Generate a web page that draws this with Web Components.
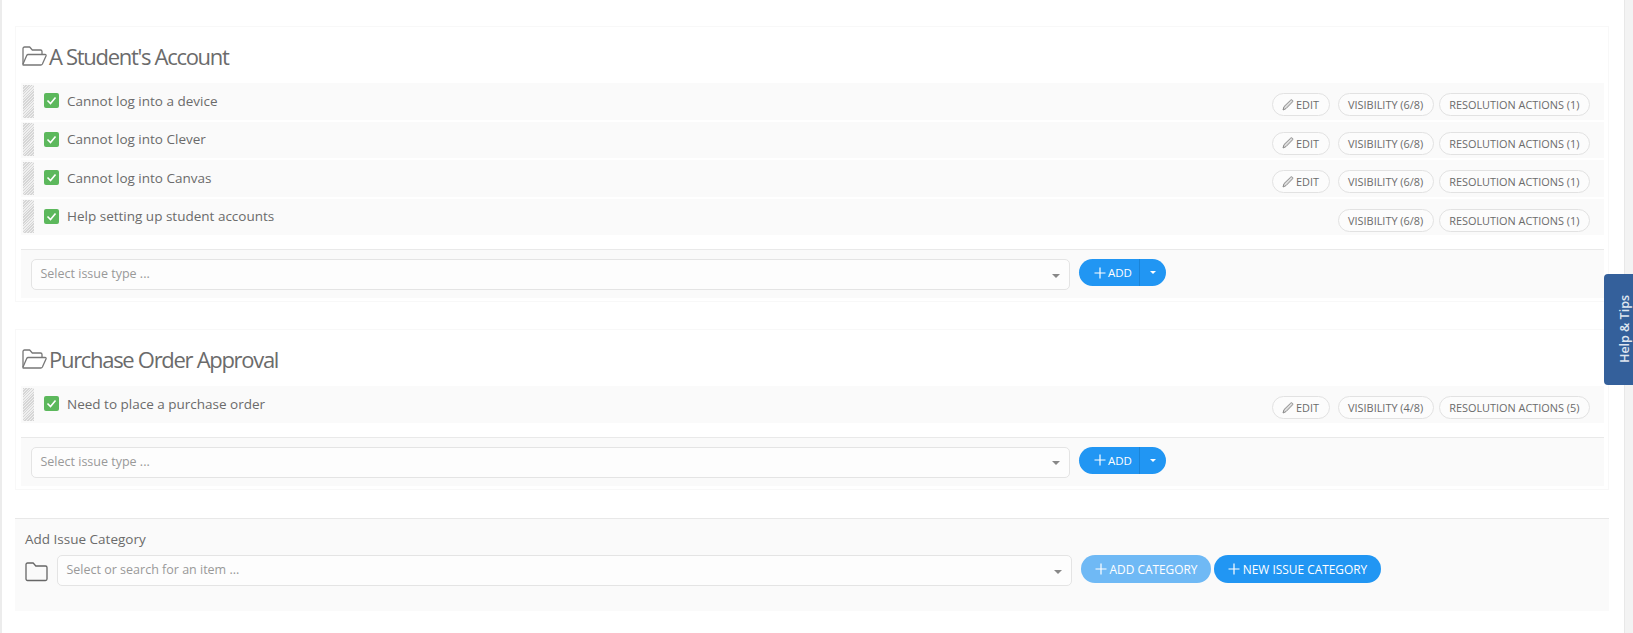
<!DOCTYPE html>
<html>
<head>
<meta charset="utf-8">
<style>
  html, body { margin: 0; height: 100%; overflow: hidden; background: #f3f3f3; }
  body { font-family: "Open Sans", sans-serif; color: #6b6b6b; }
</style>
</head>
<body>
<pagina-issues>
  <categoria-issue titulo="A Student's Account">
    <fila-issue texto="Cannot log into a device" editar visibilidad="6/8" acciones="1"></fila-issue>
    <fila-issue texto="Cannot log into Clever" editar visibilidad="6/8" acciones="1"></fila-issue>
    <fila-issue texto="Cannot log into Canvas" editar visibilidad="6/8" acciones="1"></fila-issue>
    <fila-issue texto="Help setting up student accounts" visibilidad="6/8" acciones="1"></fila-issue>
  </categoria-issue>
  <categoria-issue titulo="Purchase Order Approval" class="segunda">
    <fila-issue texto="Need to place a purchase order" editar visibilidad="4/8" acciones="5"></fila-issue>
  </categoria-issue>
  <agregar-categoria></agregar-categoria>
</pagina-issues>
<tab-ayuda></tab-ayuda>

<script>
const iconoPlus = `<svg width="12" height="12" viewBox="0 0 12 12" style="flex:none"><path d="M6 .5v11M.5 6h11" stroke="#fff" stroke-width="1.2" fill="none"/></svg>`;

class PaginaIssues extends HTMLElement {
    constructor() {
        super();
        this.attachShadow({ mode: "open" });
        this.shadowRoot.innerHTML = `
            <style>
                :host {
                    display: block;
                    box-sizing: border-box;
                    width: 1625px;
                    height: 633px;
                    background: #fff;
                    border-left: 2px solid #ececec;
                    border-right: 1px solid #e8e8e8;
                    padding: 26px 15px 0 13px;
                }
                ::slotted(categoria-issue) { margin-bottom: 27px; }
            </style>
            <slot></slot>
        `;
    }
}

class CategoriaIssue extends HTMLElement {
    constructor() {
        super();
        this.attachShadow({ mode: "open" });
    }

    connectedCallback() {
        this.shadowRoot.innerHTML = `
            <style>
                :host {
                    display: block;
                    border: 1px solid #f8f8f8;
                    padding: 0 4px 3px 5px;
                }
                h2 {
                    display: flex;
                    align-items: center;
                    gap: 2px;
                    margin: 0;
                    height: 56px;
                    padding-top: 1px;
                    box-sizing: border-box;
                    font-size: 22px;
                    font-weight: 400;
                    letter-spacing: -1.3px;
                    color: #6b6b6b;
                }
                svg { flex: none; margin-top: 1px; }
                .filas { display: flex; flex-direction: column; gap: 2px; }
                selector-issue { margin-top: 14px; }
            </style>
            <h2>
                <svg width="26" height="22" viewBox="0 0 26 22" fill="none" stroke="#777" stroke-width="1.3" stroke-linejoin="round">
                    <path d="M2 19V3.5C2 2.7 2.7 2 3.5 2h5.2l2.6 3h8.2c.8 0 1.5.7 1.5 1.5V9"/>
                    <path d="M2.2 20h17.6c.7 0 1.2-.3 1.6-1l3.6-8c.3-.8-.1-1.5-1-1.5H7.2c-.7 0-1.2.3-1.5 1L2 19c-.2.6 0 1 .2 1z"/>
                </svg>
                <span>${this.getAttribute("titulo")}</span>
            </h2>
            <div class="filas"><slot></slot></div>
            <selector-issue></selector-issue>
        `;
    }
}

class FilaIssue extends HTMLElement {
    constructor() {
        super();
        this.attachShadow({ mode: "open" });
    }

    connectedCallback() {
        const editar = this.hasAttribute("editar");
        this.shadowRoot.innerHTML = `
            <style>
                :host {
                    display: flex;
                    align-items: center;
                    box-sizing: border-box;
                    height: 36.5px;
                    padding: 2px 14px 0 2px;
                    background: #fafafa;
                }
                .asa {
                    width: 11px;
                    height: 33px;
                    flex: none;
                    margin-top: -2px;
                    background: repeating-linear-gradient(135deg, #d6d6d6 0 1px, #efefef 1px 2px);
                }
                .check {
                    width: 15px;
                    height: 15px;
                    flex: none;
                    margin: -3px 8px 0 10px;
                    border-radius: 2px;
                    background: #5cb85c;
                    display: flex;
                    align-items: center;
                    justify-content: center;
                }
                .texto { flex: 1; font-size: 13.5px; color: #6b6b6b; margin-top: -3px; }
                .botones { display: flex; gap: 5px; margin-top: 5px; }
                .editar { margin-right: 3px; }
            </style>
            <span class="asa"></span>
            <span class="check">
                <svg width="11" height="9" viewBox="0 0 11 9" fill="none" stroke="#fff" stroke-width="1.6"><path d="M1.5 4.5l3 3 5-6"/></svg>
            </span>
            <span class="texto">${this.getAttribute("texto")}</span>
            <span class="botones">
                ${editar ? `<boton-pill class="editar" lapiz>Edit</boton-pill>` : ""}
                <boton-pill>Visibility (${this.getAttribute("visibilidad")})</boton-pill>
                <boton-pill>Resolution Actions (${this.getAttribute("acciones")})</boton-pill>
            </span>
        `;
    }
}

class BotonPill extends HTMLElement {
    constructor() {
        super();
        this.attachShadow({ mode: "open" });
    }

    connectedCallback() {
        const lapiz = this.hasAttribute("lapiz");
        this.shadowRoot.innerHTML = `
            <style>
                :host {
                    display: inline-flex;
                    align-items: center;
                    gap: 2px;
                    box-sizing: border-box;
                    height: 23px;
                    padding: 0 9.5px;
                    border: 1px solid #e2e2e2;
                    border-radius: 12px;
                    background: #fcfcfc;
                    font-size: 10.9px;
                    color: #6b6b6b;
                    text-transform: uppercase;
                    white-space: nowrap;
                }
            </style>
            ${lapiz ? `<svg width="12" height="12" viewBox="0 0 12 12" fill="#ddd" stroke="#888" stroke-width="1"><path d="M1 11l1-3.4L8.6 1.2c.5-.5 1.3-.5 1.8 0s.5 1.3 0 1.8L4 9.6z"/></svg>` : ""}
            <slot></slot>
        `;
    }
}

class CajaSelect extends HTMLElement {
    constructor() {
        super();
        this.attachShadow({ mode: "open" });
    }

    connectedCallback() {
        this.shadowRoot.innerHTML = `
            <style>
                :host {
                    display: flex;
                    align-items: center;
                    box-sizing: border-box;
                    height: 31px;
                    padding: 0 9px 0 8.5px;
                    border: 1px solid #e4e4e4;
                    border-radius: 5px;
                    background: #fdfdfd;
                    font-size: 12.5px;
                    color: #999;
                }
                span { flex: 1; margin-top: -2px; }
                i {
                    width: 0;
                    height: 0;
                    margin-top: 2px;
                    border-left: 4px solid transparent;
                    border-right: 4px solid transparent;
                    border-top: 4px solid #888;
                }
            </style>
            <span>${this.getAttribute("texto")}</span><i></i>
        `;
    }
}

class SelectorIssue extends HTMLElement {
    constructor() {
        super();
        this.attachShadow({ mode: "open" });
        this.shadowRoot.innerHTML = `
            <style>
                :host {
                    display: flex;
                    align-items: flex-start;
                    box-sizing: border-box;
                    height: 49px;
                    padding: 9px 0 0 10px;
                    border-top: 1px solid #e9e9e9;
                    background: #fafafa;
                }
                caja-select { width: 1039px; }
                .add {
                    display: flex;
                    height: 27px;
                    margin-left: 9px;
                    color: #fff;
                    font-size: 11.5px;
                    background: #2196f3;
                    border-radius: 14px;
                    overflow: hidden;
                }
                .main {
                    display: flex;
                    align-items: center;
                    gap: 2px;
                    width: 61px;
                    box-sizing: border-box;
                    padding-left: 15px;
                    border-right: 1px solid #1a84d8;
                }
                .flecha {
                    width: 26px;
                    display: flex;
                    align-items: center;
                    justify-content: center;
                }
                .flecha i {
                    border-left: 3px solid transparent;
                    border-right: 3px solid transparent;
                    border-top: 3px solid #fff;
                }
            </style>
            <caja-select texto="Select issue type ..."></caja-select>
            <div class="add">
                <span class="main">${iconoPlus}ADD</span>
                <span class="flecha"><i></i></span>
            </div>
        `;
    }
}

class AgregarCategoria extends HTMLElement {
    constructor() {
        super();
        this.attachShadow({ mode: "open" });
        this.shadowRoot.innerHTML = `
            <style>
                :host {
                    display: block;
                    box-sizing: border-box;
                    height: 93px;
                    margin-top: 28.5px;
                    padding: 11px 10px 0;
                    background: #fafafa;
                    border-top: 1px solid #e8e8e8;
                }
                .titulo { font-size: 13.5px; color: #6b6b6b; line-height: 19px; }
                .linea { display: flex; align-items: flex-start; margin-top: 6px; }
                .carpeta { flex: none; margin: 7px 9px 0 0; }
                caja-select { width: 1015px; }
                .azul {
                    display: flex;
                    align-items: center;
                    justify-content: center;
                    gap: 3px;
                    height: 28px;
                    border-radius: 14px;
                    color: #fff;
                    font-size: 11.9px;
                    background: #2196f3;
                    white-space: nowrap;
                }
                .cat { width: 130px; margin-left: 9px; background: #6fb9f5; }
                .nueva { width: 167px; margin-left: 3px; }
            </style>
            <div class="titulo">Add Issue Category</div>
            <div class="linea">
                <svg class="carpeta" width="23" height="20" viewBox="0 0 23 20" fill="none" stroke="#666" stroke-width="1.3" stroke-linejoin="round">
                    <path d="M1 17V2.5C1 1.7 1.7 1 2.5 1h5.7l2.6 3h9.7c.8 0 1.5.7 1.5 1.5V17c0 .8-.7 1.5-1.5 1.5h-18C1.7 18.5 1 17.8 1 17z"/>
                </svg>
                <caja-select texto="Select or search for an item ..."></caja-select>
                <span class="azul cat">${iconoPlus}ADD CATEGORY</span>
                <span class="azul nueva">${iconoPlus}NEW ISSUE CATEGORY</span>
            </div>
        `;
    }
}

class TabAyuda extends HTMLElement {
    constructor() {
        super();
        this.attachShadow({ mode: "open" });
        this.shadowRoot.innerHTML = `
            <style>
                :host {
                    position: fixed;
                    top: 274px;
                    left: 1604px;
                    width: 29px;
                    height: 111px;
                    box-sizing: border-box;
                    padding-left: 12px;
                    display: flex;
                    align-items: center;
                    justify-content: center;
                    background: #34609b;
                    border-radius: 4px 0 0 4px;
                    color: #dfe6f0;
                    font-size: 12.5px;
                    font-weight: 600;
                }
                span { writing-mode: vertical-rl; transform: rotate(180deg); white-space: nowrap; }
            </style>
            <span>Help &amp; Tips</span>
        `;
    }
}

customElements.define("pagina-issues", PaginaIssues);
customElements.define("categoria-issue", CategoriaIssue);
customElements.define("fila-issue", FilaIssue);
customElements.define("boton-pill", BotonPill);
customElements.define("caja-select", CajaSelect);
customElements.define("selector-issue", SelectorIssue);
customElements.define("agregar-categoria", AgregarCategoria);
customElements.define("tab-ayuda", TabAyuda);
</script>
</body>
</html>
